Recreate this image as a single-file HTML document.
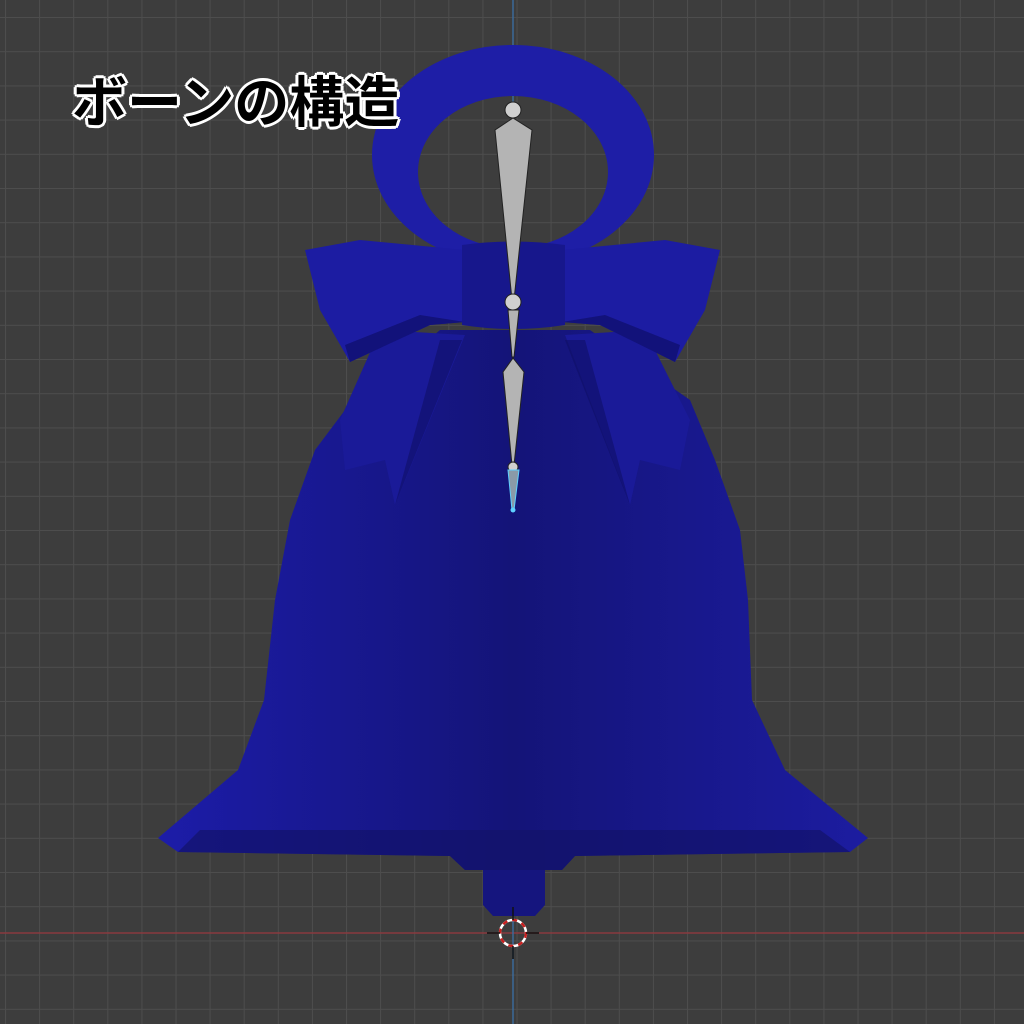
<!DOCTYPE html>
<html><head><meta charset="utf-8"><style>
html,body{margin:0;padding:0;width:1024px;height:1024px;overflow:hidden;background:#3d3d3d}
.t{position:absolute;left:72px;top:58px;font:bold 55px "Liberation Sans","Noto Sans CJK JP",sans-serif;color:#000;text-shadow:-3px 0 #fff,3px 0 #fff,0 -3px #fff,0 3px #fff,-2px -2px #fff,2px 2px #fff,-2px 2px #fff,2px -2px #fff;letter-spacing:0;white-space:nowrap}
</style></head><body>
<svg width="1024" height="1024" style="position:absolute;left:0;top:0">
<defs>
<pattern id="g" x="5" y="17" width="34.1" height="34.2" patternUnits="userSpaceOnUse">
<path d="M0 0H34.1M0 0V34.2" stroke="#4d4d4d" stroke-width="2" fill="none"/>
</pattern>
<linearGradient id="bd" x1="0" x2="1" y1="0" y2="0">
<stop offset="0" stop-color="#1c1ca8"/><stop offset="0.5" stop-color="#141478"/><stop offset="1" stop-color="#1c1ca0"/>
</linearGradient>
</defs>
<rect width="1024" height="1024" fill="url(#g)"/>
<line x1="0" y1="933" x2="1024" y2="933" stroke="#8a3a3e" stroke-width="1.5"/>
<line x1="513" y1="0" x2="513" y2="1024" stroke="#3b6a9a" stroke-width="1.5"/>
<!-- ring -->
<path fill-rule="evenodd" fill="#1e1ea6" d="M372 155A141 110 0 1 1 654 155A141 110 0 1 1 372 155Z M418 172A95 76 0 1 0 608 172A95 76 0 1 0 418 172Z"/>
<!-- stem -->
<path d="M483 868H545V905L535 916H493L483 905Z" fill="#15157e"/>
<!-- bell body -->
<path d="M440 330L590 330L690 400L715 460L740 530L748 600L752 700L785 770L868 838L850 852L575 856L562 870H465L450 856L178 852L158 838L238 770L264 700L275 600L290 520L315 450L345 410Z" fill="url(#bd)"/>
<path d="M178 852L450 856L465 870H562L575 856L850 852L820 830L200 830Z" fill="#12126a" opacity="0.7"/>
<!-- folds -->
<path d="M380 330L465 335L395 505L385 460L345 470L340 420Z" fill="#1a1a98"/>
<path d="M645 330L565 335L630 505L640 460L680 470L690 420Z" fill="#1a1a98"/>
<path d="M395 505L440 340L462 340L405 480Z" fill="#0f0f66" opacity="0.6"/>
<path d="M630 505L585 340L565 340L620 480Z" fill="#0f0f66" opacity="0.6"/>
<!-- bow wings -->
<path d="M305 250L360 240L465 250L465 322L430 325L350 362L320 310Z" fill="#1c1ca2"/>
<path d="M720 250L665 240L562 250L562 322L600 325L675 362L705 310Z" fill="#1c1ca2"/>
<path d="M465 322L430 325L350 362L345 345L420 315Z" fill="#12127a"/>
<path d="M562 322L600 325L675 362L680 345L605 315Z" fill="#12127a"/>
<!-- knot -->
<path d="M462 245Q513 238 565 245L565 325Q513 333 462 325Z" fill="#17178c"/>
<!-- bones -->
<g fill="#b4b4b4" stroke="#222" stroke-width="1">
<path d="M513 118L532 130L514 300L512 300L495 130Z"/>
<circle cx="513" cy="110" r="8" fill="#d0d0d0"/>
<path d="M508 310H519L514 357H512Z"/>
<circle cx="513" cy="302" r="8" fill="#d0d0d0"/>
<path d="M513 358L524 372L514 465H512L503 372Z"/>
<circle cx="513" cy="467" r="5" fill="#d0d0d0"/>
</g>
<path d="M508 470H519L514 510H512Z" fill="#8a9aa8" stroke="#5fd0ff" stroke-width="1"/>
<circle cx="513" cy="510" r="2.5" fill="#5fd0ff"/>
<!-- cursor -->
<circle cx="513" cy="933" r="13" fill="none" stroke="#fff" stroke-width="2.5"/>
<circle cx="513" cy="933" r="13" fill="none" stroke="#c82020" stroke-width="2.5" stroke-dasharray="5 5"/>
<path d="M487 933H500M526 933H539M513 907V920M513 946V959" stroke="#111" stroke-width="1.5"/>
</svg>
<div class="t">ボーンの構造</div>
</body></html>
